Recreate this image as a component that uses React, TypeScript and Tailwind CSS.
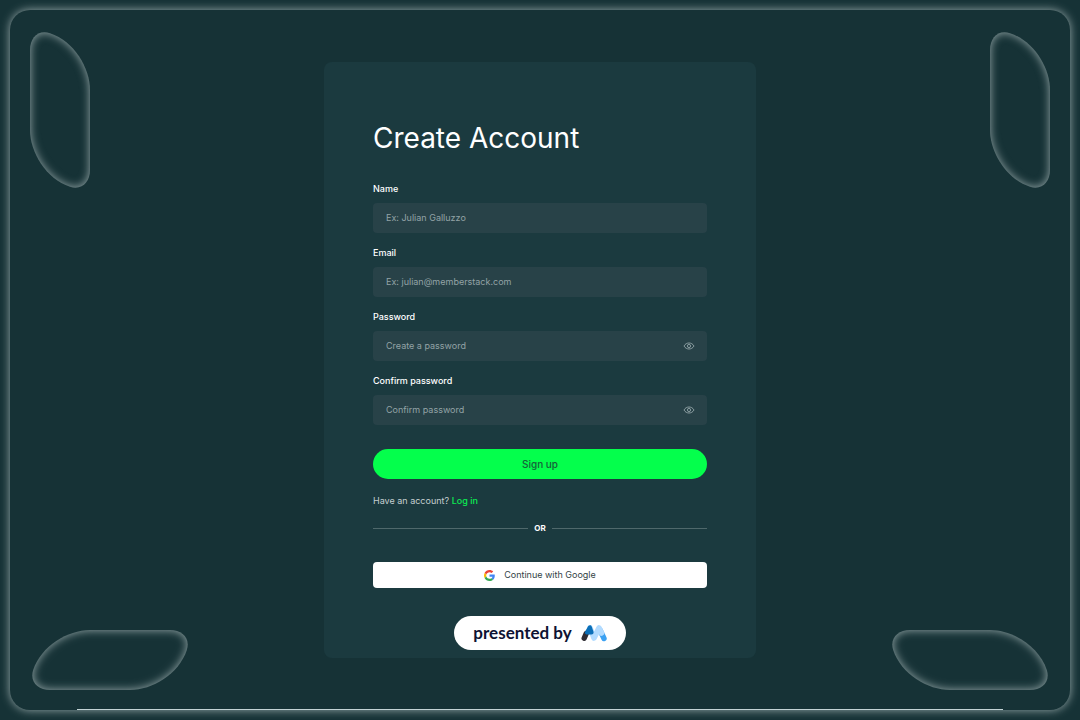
import { useState } from 'react'

const LEAF_PATH =
  'M0 20 C0 8 8 -0.5 20 3.2 C44 11 60 38 60 60 V140 C60 152 52 160.5 40 156.8 C16 149 0 122 0 100 Z'

interface FieldProps {
  id: string
  label: string
  placeholder: string
  type?: string
}

const EyeIcon = () => (
  <svg viewBox="0 0 12 8" className="w-3 h-2" fill="none" stroke="currentColor" aria-hidden="true">
    <path d="M1 4C2.2 1.9 4 1 6 1S9.800 1.900 11 4C9.800 6.100 8 7 6 7S2.200 6.100 1 4Z" strokeWidth=".9" />
    <circle cx="6" cy="4" r="1.600" strokeWidth=".9" />
  </svg>
)

const GoogleIcon = () => (
  <svg viewBox="0 0 48 48" className="w-[11px] h-[11px]" aria-hidden="true">
    <path fill="#EA4335" d="M24 9.500c3.540 0 6.710 1.220 9.210 3.600l6.850-6.850C35.900 2.380 30.470 0 24 0 14.620 0 6.510 5.380 2.560 13.220l7.980 6.190C12.430 13.720 17.740 9.500 24 9.500z" />
    <path fill="#4285F4" d="M46.980 24.550c0-1.570-.15-3.090-.38-4.550H24v9.020h12.940c-.58 2.960-2.260 5.480-4.780 7.180l7.730 6c4.510-4.180 7.090-10.360 7.090-17.650z" />
    <path fill="#FBBC05" d="M10.530 28.590c-.48-1.450-.76-2.990-.76-4.590s.27-3.140.76-4.590l-7.980-6.190C.92 16.460 0 20.120 0 24s.92 7.540 2.560 10.780l7.970-6.190z" />
    <path fill="#34A853" d="M24 48c6.480 0 11.930-2.130 15.890-5.810l-7.730-6c-2.150 1.450-4.920 2.300-8.160 2.300-6.260 0-11.570-4.220-13.470-9.910l-7.980 6.190C6.510 42.620 14.620 48 24 48z" />
  </svg>
)

const BrandMark = () => (
  <svg viewBox="0 0 26 18" className="w-[26px] h-[18px]" fill="none" strokeLinecap="round" aria-hidden="true">
    <path d="M19 6L23 14.500" stroke="#3ba1f2" strokeWidth="5.400" />
    <path d="M9 4L13 14L18 4L20.500 9" stroke="#b2dbff" strokeWidth="5.600" strokeLinejoin="round" />
    <path d="M5.200 9.500L3.200 14.200" stroke="#2f2d35" strokeWidth="5.400" />
    <path d="M8.800 3.500L6 8.500H10.500Z" fill="#0b6fb8" stroke="#0b6fb8" strokeWidth="4.200" strokeLinejoin="round" />
  </svg>
)

const Leaf = ({ className, wide = false }: { className: string; wide?: boolean }) => (
  <svg
    viewBox={wide ? '0 0 160 60' : '0 0 60 160'}
    className={`absolute ${wide ? 'w-40 h-[60px]' : 'w-[60px] h-40'} ${className}`}
    aria-hidden="true"
  >
    <g transform={wide ? 'matrix(0 1 1 0 0 0)' : undefined} clipPath="url(#leaf-clip)">
      <path d={`M-40 -40H100V200H-40Z ${LEAF_PATH}`} fill="#9aabac" fillRule="evenodd" filter="url(#leaf-glow)" />
    </g>
  </svg>
)

const Field = ({ id, label, placeholder, type = 'text' }: FieldProps) => {
  const [visible, setVisible] = useState(false)
  const isPassword = type === 'password'

  return (
    <div>
      <label htmlFor={id} className="block mb-2 text-[9px] leading-3 font-medium text-white">
        {label}
      </label>
      <div className="flex h-[30px] items-center rounded bg-[#284248] pl-[13px] pr-3">
        <input
          id={id}
          type={isPassword && visible ? 'text' : type}
          placeholder={placeholder}
          className="min-w-0 flex-1 bg-transparent text-[9px] leading-3 text-white outline-none placeholder:text-[#93a3a6]"
        />
        {isPassword && (
          <button
            type="button"
            aria-label={`Show ${label.toLowerCase()}`}
            onClick={() => setVisible(!visible)}
            className="text-[#93a5a8]"
          >
            <EyeIcon />
          </button>
        )}
      </div>
    </div>
  )
}

const App = () => {
  return (
    <div className="min-h-screen flex flex-col bg-[#163236] p-[10px] font-['Inter',sans-serif]">
      <svg className="absolute size-0" aria-hidden="true">
        <defs>
          <clipPath id="leaf-clip">
            <path d={LEAF_PATH} />
          </clipPath>
          <filter id="leaf-glow" filterUnits="userSpaceOnUse" x="-40" y="-40" width="140" height="240" colorInterpolationFilters="sRGB">
            <feGaussianBlur stdDeviation="5" />
          </filter>
        </defs>
      </svg>

      <main className="relative flex flex-1 flex-col items-center rounded-[20px] pt-[52px] shadow-[0_0_10px_#9aabac]">
        <Leaf className="left-5 top-5" />
        <Leaf className="right-5 top-5" />
        <Leaf wide className="left-5 bottom-5 -scale-x-100" />
        <Leaf wide className="right-5 bottom-5" />

        <section className="w-full max-w-[432px] rounded-lg bg-[#1b3a3f] px-[49px] pt-14 pb-2">
          <h1 className="text-[28px] leading-10 text-white">Create Account</h1>

          <form className="mt-[25px]" onSubmit={(e) => e.preventDefault()}>
            <div className="flex flex-col gap-[14px]">
              <Field id="name" label="Name" placeholder="Ex: Julian Galluzzo" />
              <Field id="email" label="Email" placeholder="Ex: julian@memberstack.com" type="email" />
              <Field id="password" label="Password" placeholder="Create a password" type="password" />
              <Field id="confirm" label="Confirm password" placeholder="Confirm password" type="password" />
            </div>
            <button type="submit" className="mt-6 h-[30px] w-full rounded-full bg-[#04ff4c] text-[10px] font-medium text-[#17613a]">
              Sign up
            </button>
          </form>

          <p className="mt-4 text-[9px] leading-3 text-[#c5cfd0]">
            Have an account?{' '}
            <a href="#login" className="font-medium text-[#0bea52]">Log in</a>
          </p>

          <div className="mt-[15px] flex items-center gap-[6px] text-[8px] leading-3 font-bold text-white">
            <span className="h-px flex-1 bg-[#4f686b]" />
            OR
            <span className="h-px flex-1 bg-[#4f686b]" />
          </div>

          <button type="button" className="mt-7 flex h-[26px] w-full items-center justify-center gap-[9px] rounded bg-white text-[9px] text-[#333f45]">
            <GoogleIcon />
            Continue with Google
          </button>

          <div className="mx-auto mt-7 flex h-[34px] w-[172px] items-center justify-center gap-[9px] rounded-full bg-white">
            <span className="font-['Lato',sans-serif] text-[17px] leading-5 font-bold whitespace-nowrap text-[#0e1233]">presented by</span>
            <BrandMark />
          </div>
        </section>

        <div className="absolute inset-x-[67px] bottom-0 h-px bg-[#c3d3d5]" />
      </main>
    </div>
  )
}

export default App
